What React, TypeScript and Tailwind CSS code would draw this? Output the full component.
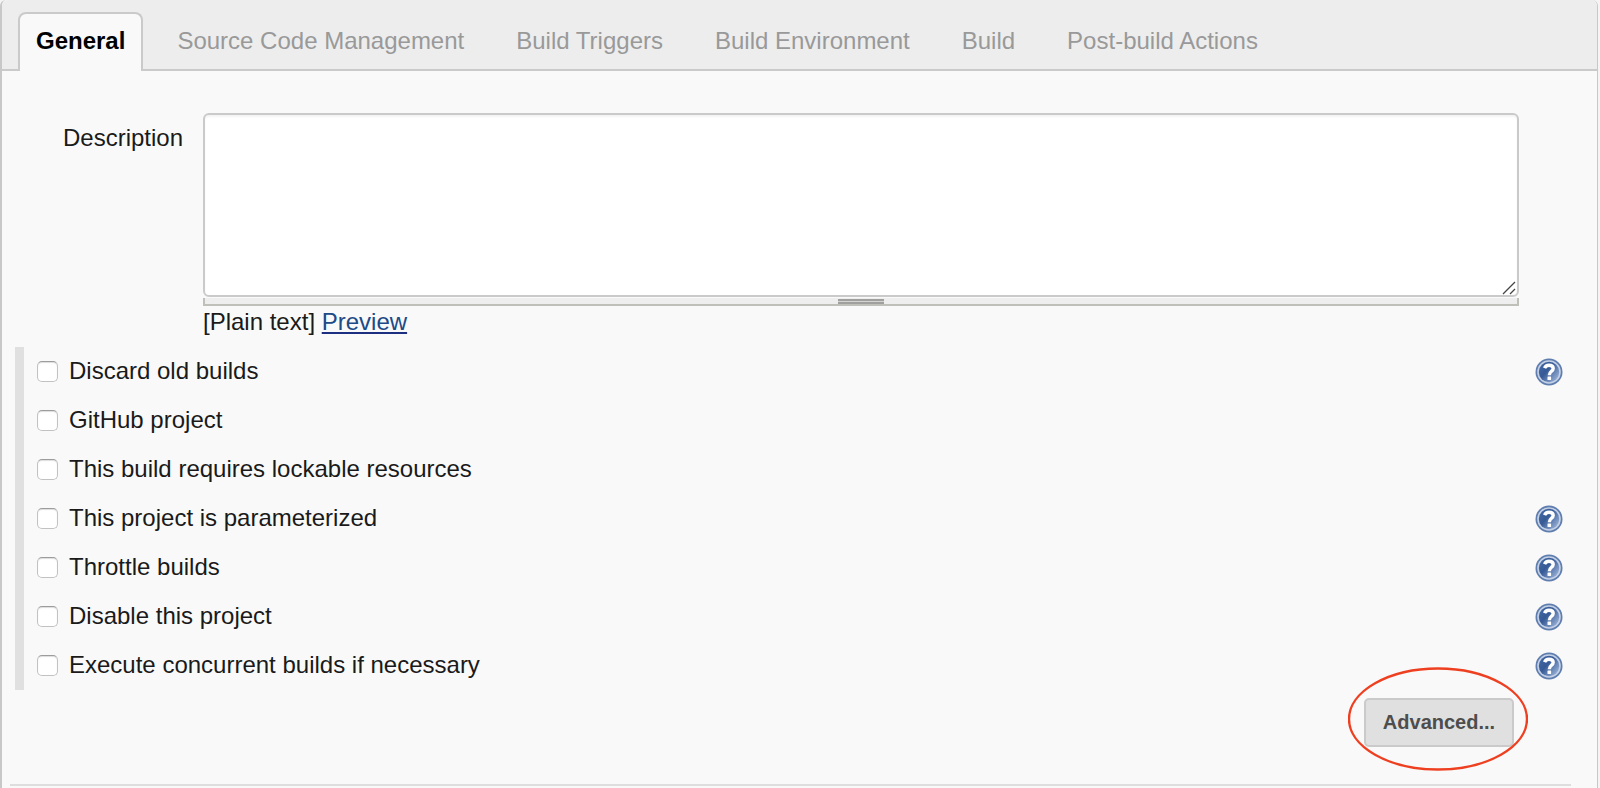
import React from "react";

const tabs = [
  "Source Code Management",
  "Build Triggers",
  "Build Environment",
  "Build",
  "Post-build Actions",
];

const options = [
  { id: "discard", label: "Discard old builds", help: true },
  { id: "github", label: "GitHub project", help: false },
  { id: "lockable", label: "This build requires lockable resources", help: false },
  { id: "params", label: "This project is parameterized", help: true },
  { id: "throttle", label: "Throttle builds", help: true },
  { id: "disable", label: "Disable this project", help: true },
  { id: "concurrent", label: "Execute concurrent builds if necessary", help: true },
];

function HelpIcon() {
  return (
    <svg viewBox="0 0 28 28" className="block size-7" aria-hidden="true">
      <defs>
        <linearGradient id="help-fill" x1="0" y1="0.1" x2="1" y2="0.9">
          <stop offset="0" stopColor="#4569a5" />
          <stop offset="0.4" stopColor="#365a96" />
          <stop offset="1" stopColor="#a3b9dc" />
        </linearGradient>
      </defs>
      <circle cx="14" cy="14" r="13.5" fill="#5f7dae" />
      <circle cx="14" cy="14" r="11.8" fill="#c3d0e5" />
      <circle cx="14" cy="14" r="10.2" fill="url(#help-fill)" />
      <path
        d="M9.6 10.2 C10.4 8 12 7.3 14 7.3 C16.8 7.3 18.2 8.7 18.2 10.6 C18.2 13.4 14.3 13.3 14.3 17.2"
        fill="none"
        stroke="#fff"
        strokeWidth="3.4"
      />
      <rect x="12.5" y="18.6" width="3.6" height="3.5" rx="0.5" fill="#fff" />
    </svg>
  );
}

export default function App() {
  return (
    <div className="min-h-screen bg-[#f4f4f4] pr-0.5 font-['Liberation_Sans',Arial,sans-serif] text-2xl leading-7 text-[#1a1a1a]">
      <main className="min-h-screen rounded-t-md border-r border-l-2 border-[#c8c8c8] bg-[#f9f9f9]">
        <nav className="flex items-end gap-4 rounded-t-md border-b-2 border-[#cacaca] bg-[#ededed] pt-3 pl-4">
          <button className="-mb-0.5 rounded-t-lg border-2 border-b-0 border-[#cacaca] bg-[#f9f9f9] px-4 pt-[13px] pb-4 font-bold text-black">
            General
          </button>
          {tabs.map((tab) => (
            <button key={tab} className="px-[18px] pt-[15px] pb-[14px] text-[#999]">
              {tab}
            </button>
          ))}
        </nav>

        <form onSubmit={(e) => e.preventDefault()}>
          <div className="flex pt-[42px] pr-[78px]">
            <label htmlFor="description" className="w-[201px] shrink-0 pt-[11px] pr-5 text-right">
              Description
            </label>
            <div className="min-w-0 flex-1">
              <div className="relative">
                <textarea
                  id="description"
                  className="block h-[184px] w-full resize-none rounded-md border-2 border-[#cacaca] bg-white p-2 shadow-[inset_0_2px_2px_#f4f4f4] outline-none"
                />
                <svg
                  viewBox="0 0 14 14"
                  className="pointer-events-none absolute right-[3px] bottom-0.5 size-3.5"
                  aria-hidden="true"
                >
                  <path d="M1 13 L13 1 M8 13 L13 8" stroke="#444" strokeWidth="1.3" fill="none" />
                </svg>
              </div>
              <div className="mt-px flex h-2 items-end justify-center border-x-2 border-b-2 border-[#c0c0bb] bg-[#eee]">
                <div className="flex h-[5px] w-[46px] flex-col justify-between bg-[#d4d4d2]">
                  <span className="h-0.5 bg-[#a0a09f]" />
                  <span className="h-0.5 bg-[#a0a09f]" />
                </div>
              </div>
              <p className="pt-[2px]">
                [Plain text]{" "}
                <a href="#preview" className="text-[#204a87] underline decoration-[#1c2f80] decoration-2 underline-offset-2">
                  Preview
                </a>
              </p>
            </div>
          </div>

          <ul className="mt-[11px] mr-[34px] ml-[13px] border-l-[9px] border-[#e0e0e0] pl-[13px]">
            {options.map((o) => (
              <li key={o.id} className="flex h-[49px] items-center justify-between">
                <label htmlFor={o.id} className="flex items-center gap-[11px]">
                  <input
                    id={o.id}
                    type="checkbox"
                    className="size-[21px] appearance-none rounded-[5px] border border-[#c2c2c2] border-t-[#9c9c9c] bg-white shadow-[inset_0_1px_1px_#ddd] checked:bg-[#3b82f6]"
                  />
                  <span className="pb-0.5">{o.label}</span>
                </label>
                {o.help && (
                  <button type="button" aria-label={"Help for " + o.label}>
                    <HelpIcon />
                  </button>
                )}
              </li>
            ))}
          </ul>

          <div className="flex justify-end pt-2 pr-[83px]">
            <div className="relative">
              <button
                type="button"
                className="h-[49px] w-[150px] rounded-[5px] border-2 border-[#cacaca] bg-[#e0e0e0] pb-0.5 text-xl font-bold text-[#4d4d4d]"
              >
                Advanced...
              </button>
              <svg
                viewBox="0 0 180 104"
                className="pointer-events-none absolute -top-[31px] -left-4 h-[104px] w-[180px]"
                aria-hidden="true"
              >
                <ellipse cx="90" cy="52" rx="89" ry="50.5" fill="none" stroke="#ee4020" strokeWidth="2.4" />
              </svg>
            </div>
          </div>
        </form>
        <hr className="mt-[37px] mr-[26px] ml-2 border-t-2 border-[#dedede]" />
      </main>
    </div>
  );
}
